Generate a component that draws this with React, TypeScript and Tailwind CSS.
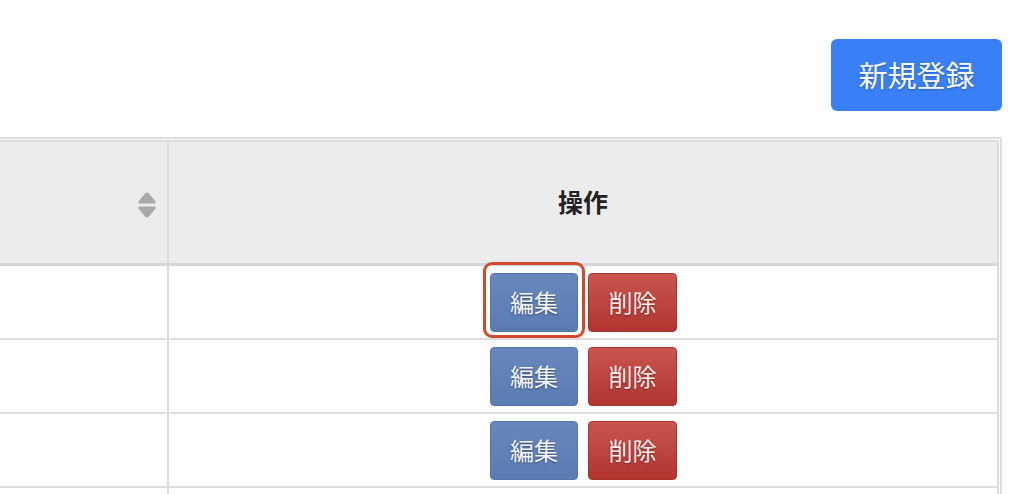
import React from "react";

const font = { fontFamily: '"Noto Sans CJK JP", "Noto Sans", sans-serif' };

function SortIcon() {
  return (
    <svg width="20" height="28" viewBox="0 0 20 28" className="block">
      <path d="M10 1.5 Q11 1.5 12 2.6 L18.5 10.5 Q19.3 12 17.6 12.5 L2.4 12.5 Q0.7 12 1.5 10.5 L8 2.6 Q9 1.5 10 1.5 Z" fill="#a9a9a9" />
      <path d="M10 26.5 Q11 26.5 12 25.4 L18.5 17.5 Q19.3 16 17.6 15.5 L2.4 15.5 Q0.7 16 1.5 17.5 L8 25.4 Q9 26.5 10 26.5 Z" fill="#a9a9a9" />
    </svg>
  );
}

function EditBtn() {
  return (
    <button className="h-[59px] w-[88px] rounded-[4px] border border-[#5674a8] bg-gradient-to-b from-[#6787bc] to-[#5b7cb3] text-[24px] text-[#f4f6fa] [text-shadow:0_1px_2px_rgba(0,0,0,0.45)]">
      編集
    </button>
  );
}

function DeleteBtn() {
  return (
    <button className="h-[59px] w-[89px] rounded-[4px] border border-[#a83430] bg-gradient-to-b from-[#c95550] to-[#b0352f] text-[24px] text-[#fbeeee] [text-shadow:0_1px_2px_rgba(0,0,0,0.4)]">
      削除
    </button>
  );
}

function Row({ ring, empty }: { ring?: boolean; empty?: boolean }) {
  return (
    <div className="flex h-[74px] border-b-2 border-[#dddddd]">
      <div className="w-[397px] shrink-0 border-r-2 border-[#dddddd]" />
      {empty ? (
        <div className="flex-1" />
      ) : (
        <div className="flex flex-1 items-center justify-center gap-[10px] pl-[1px]">
          <div className="relative">
            {ring && (
              <div className="pointer-events-none absolute -left-[7px] -right-[7px] -top-[11px] -bottom-[6px] rounded-[9px] border-[3px] border-[#d24a2d]" />
            )}
            <EditBtn />
          </div>
          <DeleteBtn />
        </div>
      )}
    </div>
  );
}

export default function App() {
  return (
    <div className="h-[494px] w-[1030px] overflow-hidden bg-white" style={font}>
      <div className="flex justify-end pr-[28px] pt-[39px]">
        <button className="h-[72px] w-[171px] rounded-[6px] bg-[#3a7ff6] text-[29px] text-white [text-shadow:0_1px_2px_rgba(0,0,0,0.25)]">
          新規登録
        </button>
      </div>
      <div className="ml-[-233px] mr-[28px] mt-[26px] border-2 border-[#dedede] p-[1px]">
        <div className="border-2 border-b-0 border-[#dcdcdc]">
          <div className="flex h-[124px] border-b-[3px] border-[#d3d8db] bg-[#ececec]">
            <div className="flex w-[397px] shrink-0 items-center justify-end border-r-2 border-[#dcdcdc] pr-[10px] pt-[4px]">
              <SortIcon />
            </div>
            <div className="flex flex-1 items-center justify-center pb-[2px] text-[25px] font-bold text-[#222222]">
              操作
            </div>
          </div>
          <Row ring />
          <Row />
          <Row />
          <Row empty />
        </div>
      </div>
    </div>
  );
}
